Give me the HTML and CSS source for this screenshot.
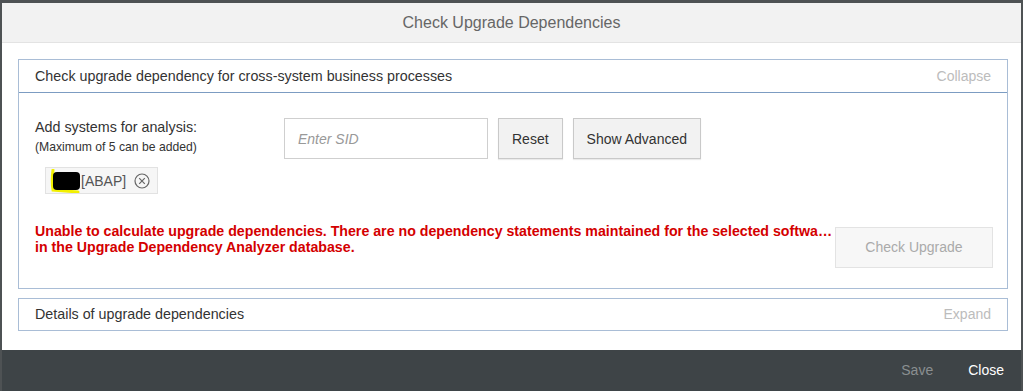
FILE: index.html
```html
<!DOCTYPE html>
<html lang="en">
<head>
    <meta charset="UTF-8">
    <title>Check Upgrade Dependencies</title>
    <link rel="stylesheet" href="styles.css">
</head>
<body>
    <div class="dialog">
        <div class="dialog-header">Check Upgrade Dependencies</div>
        <div class="dialog-body">
            <div class="panel">
                <div class="panel-header">
                    <span>Check upgrade dependency for cross-system business processes</span>
                    <span class="panel-toggle">Collapse</span>
                </div>
                <div class="panel-content">
                    <div class="systems-row">
                        <div class="systems-label">
                            <div class="label-main">Add systems for analysis:</div>
                            <div class="label-sub">(Maximum of 5 can be added)</div>
                        </div>
                        <input class="sid-input" type="text" placeholder="Enter SID">
                        <button class="btn" type="button">Reset</button>
                        <button class="btn" type="button">Show Advanced</button>
                    </div>
                    <div class="token">
                        <svg class="redacted" width="32" height="24" viewBox="0 0 32 24">
                            <path d="M4 1 C3 8 3 15 4 21 L29 23" fill="none" stroke="#f2f000" stroke-width="3" stroke-linecap="round"/>
                            <rect x="4" y="3" width="27" height="18" rx="4" fill="#000"/>
                        </svg>
                        <span class="token-text">[ABAP]</span>
                        <svg class="token-remove" width="16" height="16" viewBox="0 0 16 16">
                            <circle cx="8" cy="8" r="7" fill="none" stroke="#666" stroke-width="1.2"/>
                            <path d="M5.2 5.2 L10.8 10.8 M10.8 5.2 L5.2 10.8" stroke="#666" stroke-width="1.2"/>
                        </svg>
                    </div>
                    <div class="error-row">
                        <div class="error-text">
                            <div class="error-line">Unable to calculate upgrade dependencies. There are no dependency statements maintained for the selected softwa…</div>
                            <div class="error-line">in the Upgrade Dependency Analyzer database.</div>
                        </div>
                        <button class="btn btn-check" type="button" disabled>Check Upgrade</button>
                    </div>
                </div>
            </div>
            <div class="panel panel-closed">
                <div class="panel-header">
                    <span>Details of upgrade dependencies</span>
                    <span class="panel-toggle">Expand</span>
                </div>
            </div>
        </div>
        <div class="dialog-footer">
            <span class="footer-action disabled">Save</span>
            <span class="footer-action">Close</span>
        </div>
    </div>
</body>
</html>
```

FILE: styles.css
```css
body {
    margin: 0;
    background: #4e5254;
    font-family: 'Liberation Sans', Arial, sans-serif;
    color: #333;
}

.dialog {
    margin: 3px 2px 0 2px;
    width: 1019px;
    background: #fff;
}

.dialog-header {
    height: 39px;
    line-height: 39px;
    background: #f2f2f2;
    border-bottom: 1px solid #e3e3e3;
    text-align: center;
    font-size: 16px;
    color: #666;
}

.dialog-body {
    padding: 16px 13px 19px 16px;
}

.panel {
    border: 1px solid #a9bdd6;
}

.panel + .panel {
    margin-top: 9px;
}

.panel-header {
    display: flex;
    justify-content: space-between;
    align-items: center;
    height: 32px;
    padding: 0 16px;
    font-size: 14.3px;
    border-bottom: 1px solid #7c9cc2;
}

.panel-closed .panel-header {
    height: 31px;
    border-bottom: none;
}

.panel-toggle {
    font-size: 14px;
    color: #bcbcbc;
}

.panel-content {
    padding: 25px 14px 20px 16px;
}

.systems-row {
    display: flex;
    align-items: flex-start;
}

.systems-label {
    width: 249px;
}

.label-main {
    font-size: 14.3px;
    line-height: 16px;
    padding-top: 1px;
}

.label-sub {
    font-size: 12.2px;
    margin-top: 5px;
}

.sid-input {
    box-sizing: border-box;
    width: 204px;
    height: 41px;
    border: 1px solid #cfcfcf;
    padding: 0 13px;
    font-family: inherit;
    font-size: 14px;
    outline: none;
}

.sid-input::placeholder {
    color: #999;
    font-style: italic;
}

.btn {
    box-sizing: border-box;
    height: 41px;
    margin-left: 10px;
    padding: 0 13px;
    background: #f2f2f2;
    border: 1px solid #c9c9c9;
    box-shadow: 0 1px 1px rgba(0, 0, 0, 0.08);
    font-family: inherit;
    font-size: 14px;
    color: #333;
}

.token {
    display: inline-flex;
    align-items: center;
    height: 25px;
    margin: 8px 0 0 10px;
    padding: 0 7px 0 3px;
    background: #f6f6f6;
    border: 1px solid #e2e2e2;
}

.redacted {
    display: block;
}

.token-text {
    font-size: 14px;
    color: #555;
    margin-right: 8px;
}

.token-remove {
    display: block;
}

.error-row {
    display: flex;
    align-items: flex-start;
    margin-top: 26px;
}

.error-text {
    flex: 1;
    min-width: 0;
    color: #d40000;
    font-weight: bold;
    font-size: 14.2px;
    line-height: 16px;
}

.error-line {
    white-space: nowrap;
}

.btn-check {
    width: 158px;
    margin: 4px 0 0 0;
    background: #f7f7f7;
    border-color: #e3e3e3;
    box-shadow: none;
    color: #aaa;
}

.dialog-footer {
    display: flex;
    justify-content: flex-end;
    align-items: center;
    gap: 35px;
    height: 41px;
    padding: 0 17px;
    background: #3e4447;
    font-size: 14px;
}

.footer-action {
    color: #fff;
}

.footer-action.disabled {
    color: #8a8f91;
}
```
